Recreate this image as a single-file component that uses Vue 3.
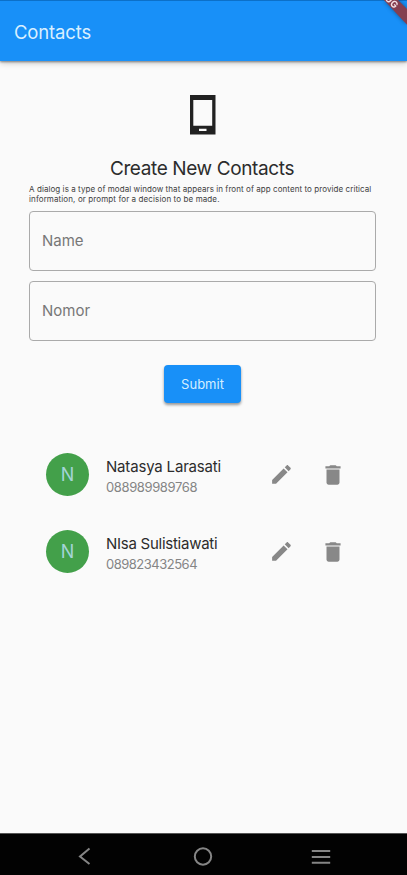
<script setup>
const fields = ['Name', 'Nomor']
const contacts = [
  { name: 'Natasya Larasati', phone: '088989989768', cls: 'first' },
  { name: 'NIsa Sulistiawati', phone: '089823432564', cls: 'second' },
]
</script>

<template>
  <div class="screen">
    <header class="appbar">
      <h1>Contacts</h1>
      <svg class="ribbon" width="40" height="40" viewBox="0 0 40 40">
        <path d="M15 -2L29 -2L42 11V27Z" fill="#843f50" />
        <text class="ribbon-text" transform="translate(26.500 4) rotate(45)" x="-10" y="3">UG</text>
      </svg>
    </header>

    <main>
      <svg class="phone" width="26" height="40" viewBox="0 0 26 40">
        <path fill="#212121" fill-rule="evenodd" d="M0 0H25.500V39.500H0ZM3.300 5V30.700H22.200V5ZM9 33.800V36H16.500V33.800Z" />
      </svg>
      <h2>Create New Contacts</h2>
      <p class="note"><span class="l1">A dialog is a type of modal window that appears in front of app content to provide critical</span><br /><span class="l2">information, or prompt for a decision to be made.</span></p>

      <div v-for="f in fields" :key="f" class="field">{{ f }}</div>

      <button class="submit">Submit</button>

      <ul class="list">
        <li v-for="c in contacts" :key="c.phone" :class="c.cls">
          <div class="avatar">N</div>
          <div class="info">
            <div class="name">{{ c.name }}</div>
            <div class="number">{{ c.phone }}</div>
          </div>
          <svg class="edit" width="26" height="26" viewBox="0 0 25 25">
            <path d="M3 17.250V21h3.750L17.810 9.940l-3.750-3.750L3 17.250zM20.710 7.040c.39-.39.39-1.020 0-1.410l-2.340-2.340c-.39-.39-1.020-.39-1.410 0l-1.830 1.830 3.750 3.750 1.830-1.830z" />
          </svg>
          <svg class="trash" width="26" height="26" viewBox="0 0 24 24">
            <path d="M6 19c0 1.100.9 2 2 2h8c1.100 0 2-.9 2-2V7H6v12zM19 4h-3.500l-1-1h-5l-1 1H5v2h14V4z" />
          </svg>
        </li>
      </ul>
    </main>

    <nav class="navbar">
      <svg width="20" height="20" viewBox="0 0 20 20"><path d="M14.500 2.500L5 10.500L14.500 18" /></svg>
      <svg width="20" height="20" viewBox="0 0 20 20"><circle cx="10" cy="10.500" r="8.200" /></svg>
      <svg width="20" height="20" viewBox="0 0 20 20"><path d="M.8 5H19.200M.8 11H19.200M.8 16.800H19.200" /></svg>
    </nav>
  </div>
</template>

<style>
body {
  background: #fafafa;
}
</style>

<style scoped>
.screen {
  position: relative;
  box-sizing: border-box;
  width: 407px;
  height: 875px;
  display: flex;
  flex-direction: column;
  overflow: hidden;
  background: #fafafa;
  color: #2c2c2c;
  font-family: Inter, Roboto, sans-serif;
}
.appbar {
  box-sizing: border-box;
  height: 61px;
  flex: none;
  display: flex;
  align-items: center;
  padding: 1px 0 0 14px;
  border-top: 1px solid #0c70c8;
  background: #1890f8;
  box-shadow: 0 1px 2px rgba(0, 0, 0, 0.4), 0 2px 6px rgba(0, 0, 0, 0.22);
}
h1 {
  margin: 0;
  font-size: 18.500px;
  line-height: 24px;
  font-weight: 400;
  letter-spacing: -0.15px;
  color: #d8efff;
}
.ribbon {
  position: absolute;
  top: 0;
  right: 0;
  filter: drop-shadow(0 0 2px rgba(0, 0, 0, 0.4));
}
.ribbon-text {
  fill: #f4dfe4;
  font-size: 9.500px;
  font-weight: 700;
}
main {
  flex: 1;
  display: flex;
  flex-direction: column;
  align-items: center;
  padding: 34px 31px 0 29px;
}
.phone {
  flex: none;
}
h2 {
  margin: 21px 1px 0 0;
  font-size: 19px;
  line-height: 26px;
  font-weight: 400;
  letter-spacing: -0.38px;
  white-space: nowrap;
}
.note {
  align-self: stretch;
  margin: 3px 0 7px;
  height: 19px;
  font-size: 8px;
  line-height: 9.500px;
  white-space: nowrap;
  color: #404040;
}
.l1 {
  letter-spacing: 0.07px;
}
.l2 {
  letter-spacing: 0.11px;
}
.field {
  box-sizing: border-box;
  align-self: stretch;
  height: 60px;
  margin-bottom: 10px;
  display: flex;
  align-items: center;
  padding: 0 0 1px 12px;
  border: 1px solid #aaa;
  border-radius: 4px;
  font-size: 15px;
  color: #777;
}
.submit {
  width: 77px;
  height: 38px;
  margin: 14px 0 0;
  padding: 0;
  border: 0;
  border-radius: 4px;
  background: #1890f8;
  box-shadow: 0 2px 3px rgba(0, 0, 0, 0.4);
  color: #d4eeff;
  font: 400 13px/38px Inter, Roboto, sans-serif;
}
.list {
  align-self: stretch;
  margin: 33px 0 0;
  padding: 0 0 0 17px;
  list-style: none;
}
li {
  display: flex;
  align-items: center;
  height: 77px;
}
.avatar {
  width: 43px;
  height: 43px;
  border-radius: 50%;
  background: #43a04a;
  color: #a4d4d8;
  font-size: 18px;
  line-height: 43px;
  text-align: center;
}
.info {
  width: 163px;
  margin-left: 17px;
  padding-top: 3px;
}
.name {
  font-size: 15px;
  line-height: 22px;
  letter-spacing: -0.18px;
  white-space: nowrap;
}
.number {
  font-size: 13px;
  line-height: 19px;
  letter-spacing: -0.38px;
  color: #858585;
}
.second .name {
  letter-spacing: -0.26px;
}
.second .number {
  letter-spacing: -0.5px;
}
li svg {
  fill: #888;
}
.trash {
  margin-left: 25px;
}
.navbar {
  box-sizing: border-box;
  height: 42px;
  flex: none;
  display: flex;
  justify-content: center;
  gap: 98px;
  padding: 12px 1px 0 0;
  border-top: 1px solid #555;
  background: #020202;
}
.navbar svg {
  fill: none;
  stroke: #858585;
  stroke-width: 2;
}
</style>
